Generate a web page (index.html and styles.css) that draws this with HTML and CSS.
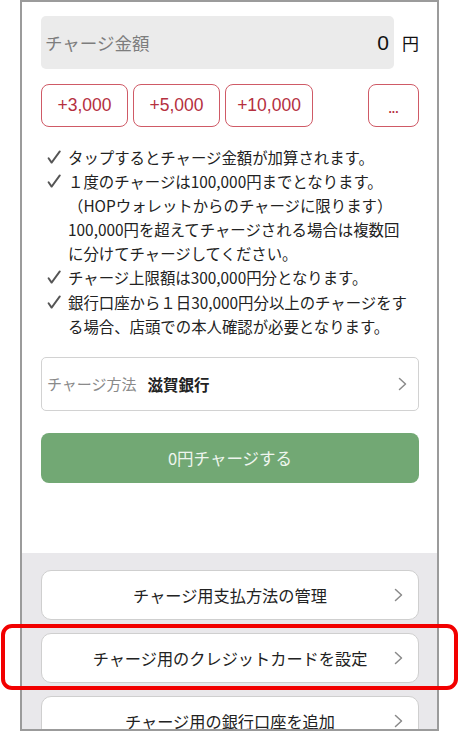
FILE: index.html
```html
<!DOCTYPE html>
<html lang="ja">
<head>
<meta charset="utf-8">
<link rel="stylesheet" href="styles.css">
</head>
<body>
<div class="frame">
  <div class="top">
    <div class="amount-row">
      <div class="amount-box">
        <span class="amount-label">チャージ金額</span>
        <span class="amount-value">0</span>
      </div>
      <span class="yen">円</span>
    </div>
    <div class="quick-row">
      <button class="quick">+3,000</button>
      <button class="quick">+5,000</button>
      <button class="quick">+10,000</button>
      <button class="quick more">...</button>
    </div>
    <ul class="notes">
      <li><svg class="check" width="14" height="14" viewBox="0 0 14 14"><path d="M1.6 8.2 L4.6 12.6 L12.8 1.4" fill="none" stroke="#555" stroke-width="1.9" stroke-linecap="round" stroke-linejoin="round"/></svg><span class="note-text">タップするとチャージ金額が加算されます。</span></li>
      <li><svg class="check" width="14" height="14" viewBox="0 0 14 14"><path d="M1.6 8.2 L4.6 12.6 L12.8 1.4" fill="none" stroke="#555" stroke-width="1.9" stroke-linecap="round" stroke-linejoin="round"/></svg><span class="note-text">１度のチャージは100,000円までとなります。<br>（HOPウォレットからのチャージに限ります）<br>100,000円を超えてチャージされる場合は複数回<br>に分けてチャージしてください。</span></li>
      <li><svg class="check" width="14" height="14" viewBox="0 0 14 14"><path d="M1.6 8.2 L4.6 12.6 L12.8 1.4" fill="none" stroke="#555" stroke-width="1.9" stroke-linecap="round" stroke-linejoin="round"/></svg><span class="note-text">チャージ上限額は300,000円分となります。</span></li>
      <li><svg class="check" width="14" height="14" viewBox="0 0 14 14"><path d="M1.6 8.2 L4.6 12.6 L12.8 1.4" fill="none" stroke="#555" stroke-width="1.9" stroke-linecap="round" stroke-linejoin="round"/></svg><span class="note-text">銀行口座から１日30,000円分以上のチャージをす<br>る場合、店頭での本人確認が必要となります。</span></li>
    </ul>
    <div class="method">
      <span class="method-label">チャージ方法</span>
      <span class="method-value">滋賀銀行</span>
      <svg class="chev" width="9" height="14" viewBox="0 0 9 14"><path d="M1.5 1.5 L7.5 7 L1.5 12.5" fill="none" stroke="#8a8a8a" stroke-width="1.5" stroke-linecap="round" stroke-linejoin="round"/></svg>
    </div>
    <button class="charge">0円チャージする</button>
  </div>
  <div class="panel">
    <div class="card"><span class="card-text">チャージ用支払方法の管理</span><svg class="chev" width="9" height="14" viewBox="0 0 9 14"><path d="M1.5 1.5 L7.5 7 L1.5 12.5" fill="none" stroke="#8a8a8a" stroke-width="1.5" stroke-linecap="round" stroke-linejoin="round"/></svg></div>
    <div class="card"><span class="card-text">チャージ用のクレジットカードを設定</span><svg class="chev" width="9" height="14" viewBox="0 0 9 14"><path d="M1.5 1.5 L7.5 7 L1.5 12.5" fill="none" stroke="#8a8a8a" stroke-width="1.5" stroke-linecap="round" stroke-linejoin="round"/></svg></div>
    <div class="card"><span class="card-text">チャージ用の銀行口座を追加</span><svg class="chev" width="9" height="14" viewBox="0 0 9 14"><path d="M1.5 1.5 L7.5 7 L1.5 12.5" fill="none" stroke="#8a8a8a" stroke-width="1.5" stroke-linecap="round" stroke-linejoin="round"/></svg></div>
  </div>
</div>
<div class="highlight"></div>
</body>
</html>
```
FILE: styles.css
```css
* { box-sizing: border-box; }
html, body { margin: 0; padding: 0; background: #fff; }
body {
  font-family: "Noto Sans CJK JP", "Noto Sans", sans-serif;
  color: #222;
  width: 460px;
  height: 731px;
  overflow: hidden;
  position: relative;
}
.frame {
  margin-left: 20px;
  width: 419px;
  height: 731px;
  border: 2px solid #9b9b9b;
  display: flex;
  flex-direction: column;
  overflow: hidden;
}
.top {
  padding: 14px 18px 0 19px;
  display: flex;
  flex-direction: column;
  height: 551px;
  flex: none;
}
.amount-row {
  display: flex;
  align-items: center;
  height: 53px;
}
.amount-box {
  flex: 1;
  height: 53px;
  background: #ebebeb;
  border-radius: 5px;
  display: flex;
  align-items: center;
  justify-content: space-between;
  padding: 0 5px 0 4px;
}
.amount-label { font-size: 17.5px; color: #7d7d7d; }
.amount-value { font-family: "Liberation Sans", sans-serif; font-size: 21px; color: #111; }
.yen { font-size: 17px; color: #111; margin-left: 8px; }
.quick-row {
  display: flex;
  gap: 5px;
  margin-top: 15px;
}
.quick {
  height: 43px;
  width: 87px;
  border: 1.5px solid #cf5a66;
  border-radius: 8px;
  background: #fff;
  color: #b5303f;
  font-family: "Liberation Sans", "Noto Sans CJK JP", sans-serif;
  font-size: 17.5px;
  padding: 0;
}
.quick:nth-child(3) { width: 88px; }
.quick.more {
  margin-left: auto;
  width: 51px;
  font-size: 12px;
  font-weight: bold;
  padding-top: 6px;
}
.notes {
  list-style: none;
  margin: 18px 0 0 0;
  padding: 0;
  font-size: 15.4px;
  line-height: 24.1px;
  color: #222;
}
.notes li { display: flex; align-items: flex-start; }
.check {
  flex: none;
  margin: 5px 7px 0 6px;
}
.note-text { white-space: nowrap; }
.method {
  margin-top: 19px;
  height: 54px;
  border: 1px solid #d2d2d2;
  border-radius: 5px;
  display: flex;
  align-items: center;
  padding: 0 11px 0 5px;
}
.method-label { font-size: 15px; color: #8a8a8a; }
.method-value { font-size: 15.5px; font-weight: bold; color: #222; margin-left: 11px; flex: 1; }
.charge {
  margin-top: 22px;
  height: 50px;
  border: none;
  border-radius: 8px;
  background: #72a874;
  color: #eef5ee;
  font-family: "Noto Sans CJK JP", sans-serif;
  font-size: 16.5px;
  width: 100%;
}
.panel {
  flex: 1;
  background: #e9e8eb;
  padding: 17px 18px 0 19px;
  display: flex;
  flex-direction: column;
  gap: 13px;
}
.card {
  flex: none;
  height: 50px;
  background: #fff;
  border: 1px solid #cfcfcf;
  border-radius: 10px;
  display: grid;
  grid-template-columns: 24px 1fr 24px;
  align-items: center;
}
.card-text {
  grid-column: 2;
  text-align: center;
  font-size: 16.2px;
  color: #222;
}
.card .chev { grid-column: 3; justify-self: start; }
.highlight {
  position: absolute;
  left: 1px;
  top: 624px;
  width: 457px;
  height: 66px;
  border: 4px solid #f20000;
  border-radius: 11px;
  pointer-events: none;
}
```
